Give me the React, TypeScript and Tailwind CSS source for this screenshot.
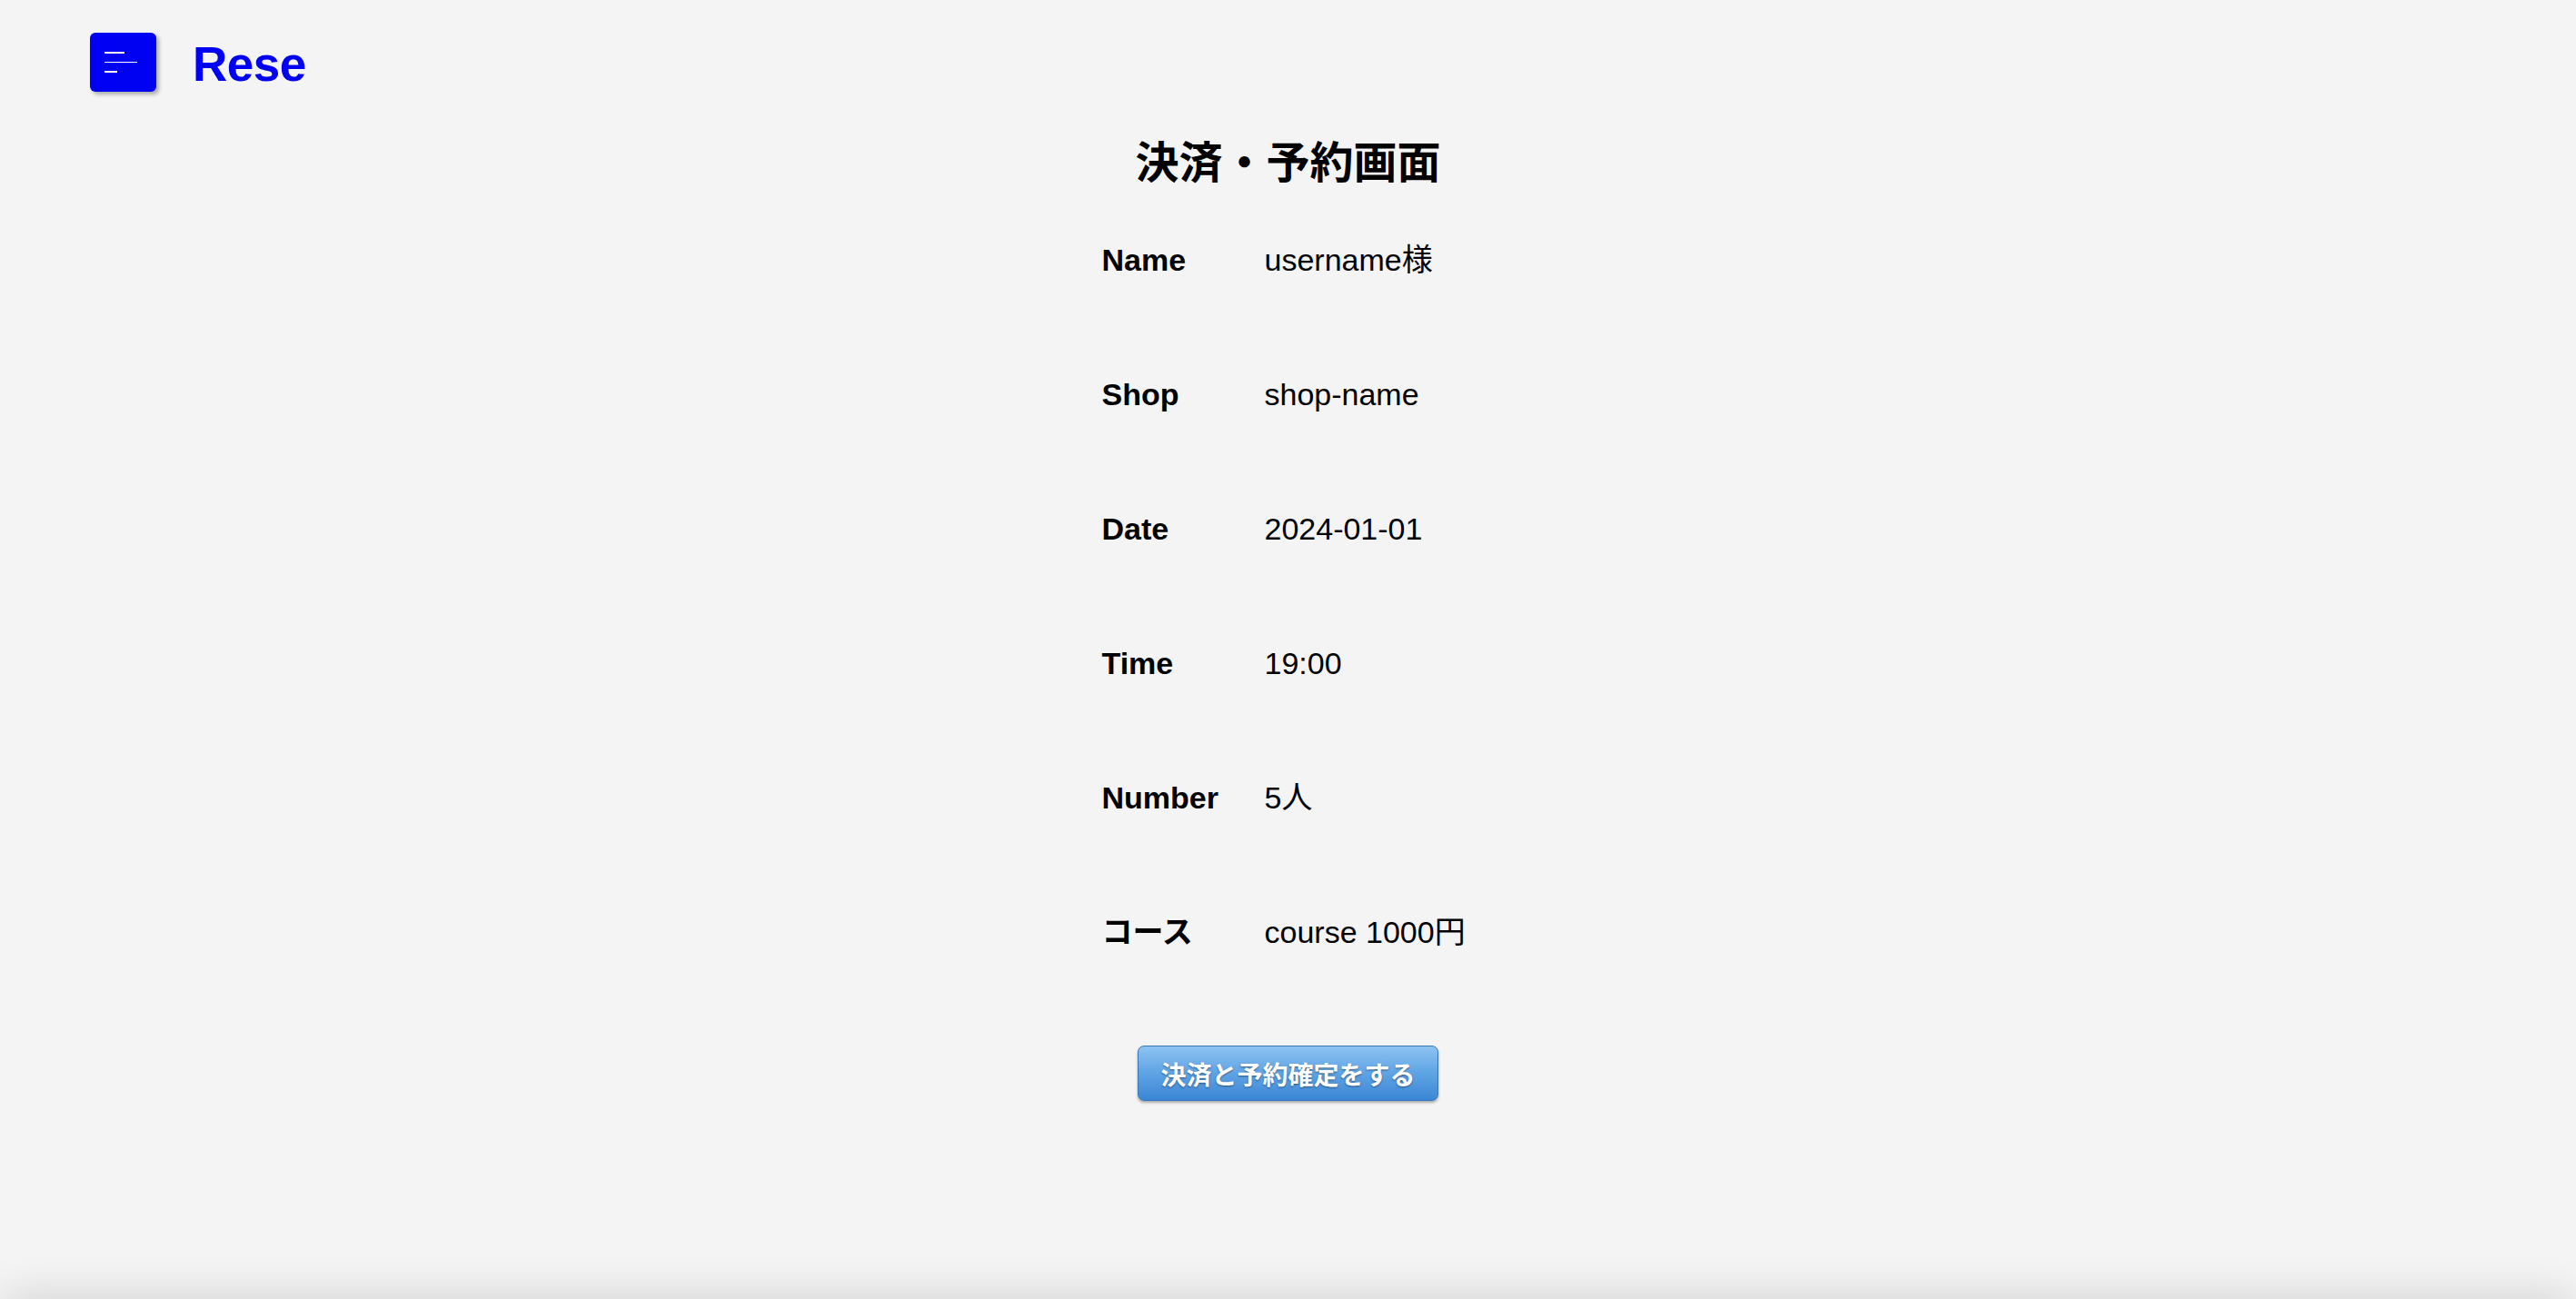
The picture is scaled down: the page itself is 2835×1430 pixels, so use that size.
import React from "react";

const rows: [string, string][] = [
  ["Name", "username様"],
  ["Shop", "shop-name"],
  ["Date", "2024-01-01"],
  ["Time", "19:00"],
  ["Number", "5人"],
  ["コース", "course 1000円"],
];

export default function App() {
  return (
    <div
      className="h-[1430px] overflow-hidden flex flex-col bg-[#f4f4f4] text-black"
      style={{ fontFamily: '"Liberation Sans", "Noto Sans CJK JP", sans-serif' }}
    >
      <header className="flex items-center pt-[36px] pl-[99px] gap-[40px]">
        <div className="w-[73px] h-[65px] rounded-[6px] bg-[#0000f2] shadow-[3px_3px_4px_rgba(0,0,0,0.3)] flex flex-col justify-center items-start pl-[16px] gap-[9px]">
          <span className="block h-[1.5px] w-[22px] bg-white" />
          <span className="block h-[1.5px] w-[36px] bg-white" />
          <span className="block h-[1.5px] w-[14px] bg-white" />
        </div>
        <span className="mt-[4px] text-[53px] leading-none font-bold text-[#0000f2] tracking-[-0.5px]">Rese</span>
      </header>

      <h1
        className="mt-[50px] text-center text-[48px] leading-[48px] font-bold"
        style={{ fontFamily: '"Noto Sans CJK JP", sans-serif' }}
      >
        決済・予約画面
      </h1>

      <div className="mt-[67px] mx-auto grid grid-cols-[179px_231px] gap-y-[107px]">
        {rows.map(([k, v]) => (
          <React.Fragment key={k}>
            <div className="text-[34px] leading-[41px] font-bold">{k}</div>
            <div className="text-[34px] leading-[41px] whitespace-nowrap">{v}</div>
          </React.Fragment>
        ))}
      </div>

      <div className="mt-[104px] flex justify-center">
        <button
          className="w-[331px] h-[61px] rounded-[7px] border border-[#3a78ba] bg-gradient-to-b from-[#8cc3f1] via-[#5fa3e4] to-[#3a86d4] text-white text-[28px] font-semibold shadow-[0_2px_3px_rgba(0,0,0,0.3)] [text-shadow:0_1px_2px_rgba(0,0,0,0.45)]"
          style={{ fontFamily: '"Noto Sans CJK JP", sans-serif' }}
        >
          決済と予約確定をする
        </button>
      </div>

      <div className="mt-auto h-[40px] -mb-[40px] w-full shrink-0 rounded-[20px] bg-[#f4f4f4] shadow-[0_0_50px_rgba(0,0,0,0.17)]" />
    </div>
  );
}
